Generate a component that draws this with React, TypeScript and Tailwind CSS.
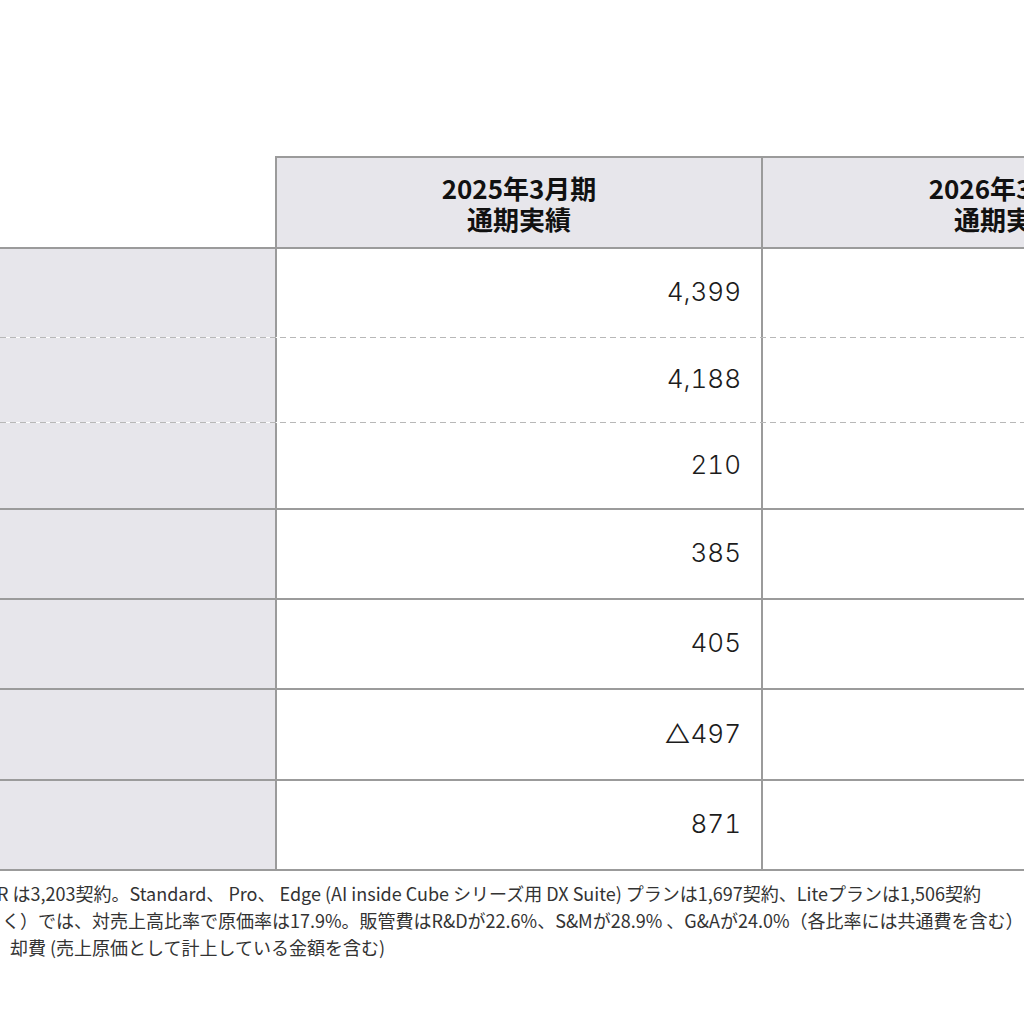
import React from 'react';

type Row = {
  value: string;
  height: string;
  line: 'solid' | 'dashed';
};

const rows: Row[] = [
  { value: '4,399', height: 'h-[90px]', line: 'solid' },
  { value: '4,188', height: 'h-[85px]', line: 'dashed' },
  { value: '210', height: 'h-[86px]', line: 'dashed' },
  { value: '385', height: 'h-[90px]', line: 'solid' },
  { value: '405', height: 'h-[90px]', line: 'solid' },
  { value: '△497', height: 'h-[91px]', line: 'solid' },
  { value: '871', height: 'h-[90px]', line: 'solid' },
];

const HeaderCell = ({ year, label, last = false }: { year: string; label: string; last?: boolean }) => (
  <div
    className={`w-[486px] shrink-0 flex flex-col items-center justify-center bg-[#e7e6eb] border-t-2 border-[#9b9b9b] text-[26px] leading-[31px] font-bold text-[#111] ${
      last ? '' : 'border-r-2'
    }`}
  >
    <span>{year}</span>
    <span>{label}</span>
  </div>
);

const TopLine = ({ kind }: { kind: 'solid' | 'dashed' }) =>
  kind === 'solid' ? (
    <div className="h-[2px] w-full bg-[#9b9b9b] shrink-0" />
  ) : (
    <div className="h-px w-full shrink-0 bg-[linear-gradient(to_right,#b8b8b8_60%,transparent_60%)] bg-[length:10px_1px] bg-repeat-x" />
  );

export default function App() {
  return (
    <div className="w-[1024px] h-[1024px] overflow-hidden bg-white font-['Noto_Sans_CJK_JP',sans-serif]">
      <div className="w-[1249px] pt-[156px]">
        {/* header */}
        <div className="flex h-[91px]">
          <div className="w-[277px] shrink-0 border-r-2 border-[#9b9b9b] bg-white" />
          <HeaderCell year="2025年3月期" label="通期実績" />
          <HeaderCell year="2026年3月期" label="通期実績" last />
        </div>

        {/* body */}
        {rows.map((row, i) => (
          <div key={i} className={`flex flex-col ${row.height}`}>
            <TopLine kind={row.line} />
            <div className="flex flex-1">
              <div className="w-[277px] shrink-0 bg-[#e7e6eb] border-r-2 border-[#9b9b9b]" />
              <div className="w-[486px] shrink-0 flex items-center justify-end pr-[20px] pb-[3px] border-r-2 border-[#9b9b9b] bg-white">
                <span className="font-['Inter','Noto_Sans_CJK_JP',sans-serif] font-light tabular-nums text-[26px] text-[#1c1c1c]">
                  {row.value}
                </span>
              </div>
              <div className="w-[486px] shrink-0 bg-white" />
            </div>
          </div>
        ))}
        <TopLine kind="solid" />
      </div>

      {/* notes */}
      <div className="mt-[9px] text-[18px] leading-[27px] text-[#333] whitespace-nowrap">
        <p className="ml-[-3px]">
          R は3,203契約。Standard、 Pro、 Edge (AI inside Cube シリーズ用 DX Suite) プランは1,697契約、Liteプランは1,506契約
        </p>
        <p className="ml-[2px]">
          く）では、対売上高比率で原価率は17.9%。販管費はR&amp;Dが22.6%、S&amp;Mが28.9% 、G&amp;Aが24.0%（各比率には共通費を含む）
        </p>
        <p className="ml-[10px]">却費 (売上原価として計上している金額を含む)</p>
      </div>
    </div>
  );
}
